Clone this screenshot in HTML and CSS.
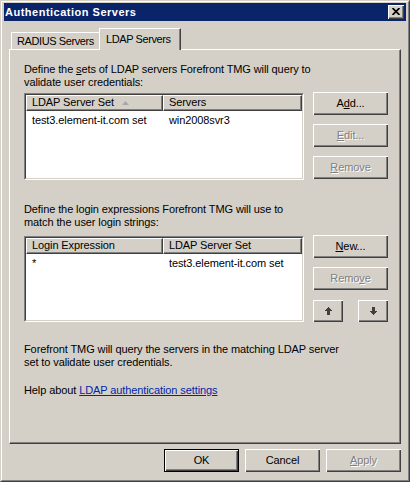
FILE: index.html
```html
<!DOCTYPE html>
<html>
<head>
<meta charset="utf-8">
<link rel="stylesheet" href="styles.css">
</head>
<body>
<div class="window">
  <div class="frame">
    <div class="titlebar">
      <span class="title">Authentication Servers</span>
      <div class="close">
        <svg width="8" height="7" viewBox="0 0 8 7"><path d="M0.5 0 L7.5 7 M7.5 0 L0.5 7" stroke="#000" stroke-width="1.7" fill="none"/></svg>
      </div>
    </div>
    <div class="content">
      <div class="tabs">
        <div class="tab">RADIUS Servers</div>
        <div class="tab active">LDAP Servers</div>
      </div>
      <div class="panel">
        <p class="desc">Define the <u>s</u>ets of LDAP servers Forefront TMG will query to<br>validate user credentials:</p>
        <div class="group g1">
          <div class="list l1">
            <div class="list-inner">
              <div class="list-head">
                <div class="hcell">LDAP Server Set<svg class="sort" width="7" height="4" viewBox="0 0 7 4"><polygon points="3.5,0 7,4 0,4" fill="#a8a8a8"/></svg></div>
                <div class="hcell">Servers</div>
              </div>
              <div class="row">
                <div class="cell">test3.element-it.com set</div>
                <div class="cell">win2008svr3</div>
              </div>
            </div>
          </div>
          <div class="btns">
            <div class="btn">A<u>d</u>d...</div>
            <div class="btn disabled"><u>E</u>dit...</div>
            <div class="btn disabled"><u>R</u>emove</div>
          </div>
        </div>
        <p class="desc d2">Define the login expressions Forefront TMG will use to<br>match the user login strings:</p>
        <div class="group g2">
          <div class="list l2">
            <div class="list-inner">
              <div class="list-head">
                <div class="hcell">Login Expression</div>
                <div class="hcell">LDAP Server Set</div>
              </div>
              <div class="row">
                <div class="cell">*</div>
                <div class="cell">test3.element-it.com set</div>
              </div>
            </div>
          </div>
          <div class="btns b2">
            <div class="btn"><u>N</u>ew...</div>
            <div class="btn disabled">Remo<u>v</u>e</div>
            <div class="arrows">
              <div class="btn small">
                <svg width="7" height="8" viewBox="0 0 7 8" shape-rendering="crispEdges"><polygon points="3.5,0 7,4 5,4 5,8 2,8 2,4 0,4" fill="#404040"/></svg>
              </div>
              <div class="btn small">
                <svg width="7" height="8" viewBox="0 0 7 8" shape-rendering="crispEdges"><polygon points="2,0 5,0 5,4 7,4 3.5,8 0,4 2,4" fill="#404040"/></svg>
              </div>
            </div>
          </div>
        </div>
        <p class="desc d3">Forefront TMG will query the servers in the matching LDAP server<br>set to validate user credentials.</p>
        <p class="desc d4">Help about <a class="link">LDAP authentication settings</a></p>
      </div>
      <div class="footer">
        <div class="btn default">OK</div>
        <div class="btn">Cancel</div>
        <div class="btn disabled"><u>A</u>pply</div>
      </div>
    </div>
  </div>
</div>
</body>
</html>
```
FILE: styles.css
```css
body {
  margin: 0;
  background: #d4d0c8;
  font: 11px/13px "Liberation Sans", Arial, sans-serif;
  letter-spacing: -0.1px;
  color: #000;
}
.window {
  width: 410px;
  height: 482px;
  box-sizing: border-box;
  border: 1px solid;
  border-color: #d4d0c8 #404040 #404040 #d4d0c8;
  background: #d4d0c8;
}
.frame {
  height: 100%;
  box-sizing: border-box;
  border: 1px solid;
  border-color: #fff #808080 #808080 #fff;
  padding: 1px 2px 2px;
}
.titlebar {
  height: 18px;
  background: #0a246a;
  display: flex;
  align-items: center;
  justify-content: space-between;
  padding: 0 2px 0 1px;
}
.title {
  color: #fff;
  font-weight: bold;
  line-height: 18px;
  letter-spacing: 0.5px;
}
.close {
  width: 16px;
  height: 14px;
  box-sizing: border-box;
  background: #d4d0c8;
  box-shadow: inset 1px 1px #fff, inset -1px -1px #404040, inset -2px -2px #808080;
  display: flex;
  align-items: center;
  justify-content: center;
  padding: 0 1px 1px 0;
}
.close svg { display: block; }
.content {
  padding: 0 5px;
}
.tabs {
  display: flex;
  align-items: flex-end;
  height: 28px;
  box-sizing: border-box;
  padding-left: 2px;
}
.tab {
  width: 90px;
  height: 17px;
  box-sizing: border-box;
  border: 1px solid;
  border-bottom: none;
  border-color: #fff #404040 transparent #fff;
  box-shadow: inset -1px 0 #808080;
  padding: 2px 0 0 5px;
  background: #d4d0c8;
  white-space: nowrap;
  letter-spacing: -0.4px;
}
.tab.active {
  width: 82px;
  height: 22px;
  margin-left: -2px;
  margin-bottom: -1px;
  padding: 4px 0 0 6px;
  position: relative;
  z-index: 1;
}
.panel {
  height: 395px;
  box-sizing: border-box;
  border: 1px solid;
  border-color: #fff #404040 #404040 #fff;
  box-shadow: inset -1px -1px #808080;
  padding: 13px 0 0 14px;
}
.desc {
  margin: 0;
  white-space: nowrap;
}
.d2 { margin-top: 23px; }
.d3 { margin-top: 21px; }
.d4 { margin-top: 15px; }
.link {
  color: #0026a8;
  text-decoration: underline;
}
.group {
  display: flex;
  align-items: flex-start;
}
.g1 { margin-top: 3px; }
.g2 { margin-top: 6px; }
.list {
  width: 280px;
  height: 87px;
  margin-top: 1px;
  box-sizing: border-box;
  border: 1px solid;
  border-color: #808080 #fff #fff #808080;
}
.l2 { height: 86px; }
.list-inner {
  height: 100%;
  box-sizing: border-box;
  border: 1px solid;
  border-color: #404040 #d4d0c8 #d4d0c8 #404040;
  background: #fff;
}
.list-head {
  display: grid;
  grid-template-columns: 137px 1fr;
  height: 16px;
}
.hcell {
  box-sizing: border-box;
  background: #d4d0c8;
  border: 1px solid;
  border-color: #fff #404040 #404040 #fff;
  box-shadow: inset -1px -1px #808080;
  padding-left: 5px;
  line-height: 13px;
  white-space: nowrap;
}
.sort {
  margin-left: 8px;
  vertical-align: 1px;
}
.row {
  display: grid;
  grid-template-columns: 137px 1fr;
  height: 16px;
  line-height: 16px;
  margin-top: 1px;
}
.cell {
  padding-left: 6px;
  white-space: nowrap;
}
.btns {
  display: flex;
  flex-direction: column;
  gap: 9px;
  margin-left: 9px;
}
.b2 .arrows {
  display: flex;
  gap: 15px;
  margin-top: 1px;
}
.btn {
  width: 75px;
  height: 23px;
  box-sizing: border-box;
  background: #d4d0c8;
  box-shadow: inset 1px 1px #fff, inset -1px -1px #404040, inset -2px -2px #808080;
  display: flex;
  align-items: center;
  justify-content: center;
  padding-bottom: 1px;
  white-space: nowrap;
}
.btn.small {
  width: 30px;
  height: 22px;
}
.btn.small svg { display: block; }
.btn.disabled {
  color: #808080;
  text-shadow: 1px 1px 0 #fff;
}
.btn.default {
  border: 1px solid #000;
}
.footer {
  display: flex;
  justify-content: flex-end;
  gap: 6px;
  padding-top: 5px;
}
```
